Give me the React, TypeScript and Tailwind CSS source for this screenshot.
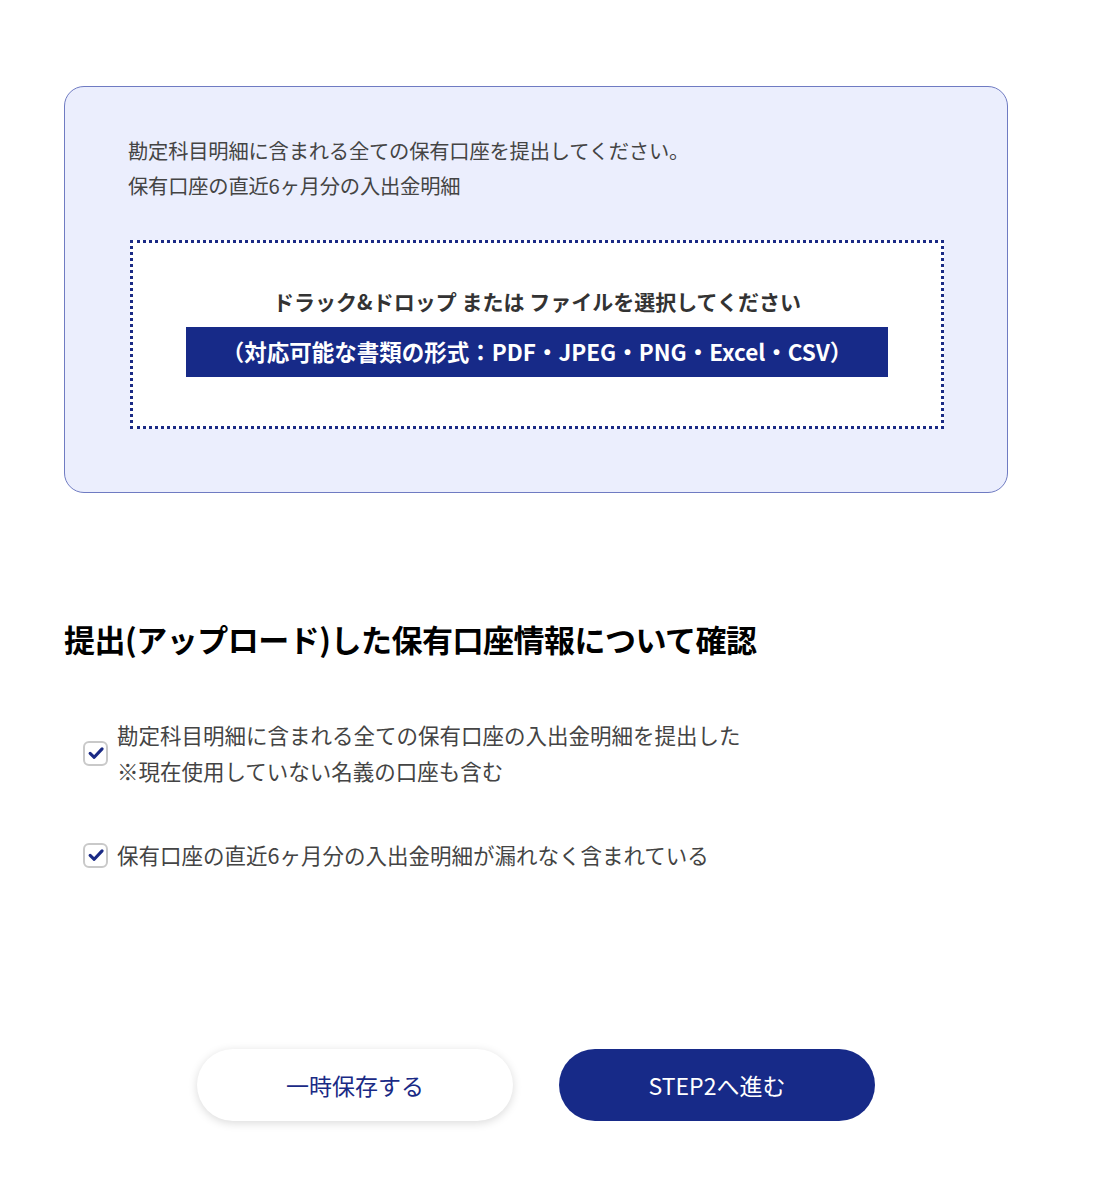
const font = { fontFamily: '"Noto Sans CJK JP", "Noto Sans", sans-serif' };

function CheckItem({ lines }: { lines: string[] }) {
  return (
    <label className="flex items-center gap-[9px]">
      <span className="grid h-[25px] w-[25px] shrink-0 place-items-center rounded-[6px] border-2 border-[#c9c9c9] bg-white">
        <svg viewBox="0 0 16 16" className="h-[18px] w-[18px]">
          <path d="M2.8 8.4 L6.4 11.8 L13.4 4.4" fill="none" stroke="#1a2a85" strokeWidth="2.8" strokeLinecap="round" strokeLinejoin="round" />
        </svg>
      </span>
      <span className="text-[21.5px] leading-[36px] text-[#444]">
        {lines.map((l) => (
          <span key={l} className="block">
            {l}
          </span>
        ))}
      </span>
    </label>
  );
}

export default function App() {
  return (
    <main className="min-h-[1200px] bg-white px-[64px] pt-[86px]" style={font}>
      <div className="w-[944px]">
        <section className="rounded-[20px] border-[1.5px] border-[#6f7bc2] bg-[#ebeefd] px-[63px] pb-[63px] pt-[46px]">
          <p className="text-[20.3px] leading-[35px] tracking-[-0.2px] text-[#444]">
            勘定科目明細に含まれる全ての保有口座を提出してください。
            <br />
            保有口座の直近6ヶ月分の入出金明細
          </p>
          <div className="ml-[2px] mt-[37px] w-[814px] border-[3px] border-dotted border-[#1a2a85] bg-white px-[53px] pb-[49px] pt-[41px]">
            <p className="text-center text-[21px] font-bold leading-[34px] text-[#333]">
              ドラック&ドロップ または ファイルを選択してください
            </p>
            <div className="mt-[9px] flex h-[50px] items-center justify-center bg-[#172a88] text-[22.5px] font-bold text-white">
              （対応可能な書類の形式：PDF・JPEG・PNG・Excel・CSV）
            </div>
          </div>
        </section>

        <h2 className="mt-[124px] text-[31px] font-bold leading-[44px] tracking-[-0.5px] text-black">
          提出(アップロード)した保有口座情報について確認
        </h2>

        <div className="mt-[56px] flex flex-col gap-[48px] pl-[19px]">
          <CheckItem lines={["勘定科目明細に含まれる全ての保有口座の入出金明細を提出した", "※現在使用していない名義の口座も含む"]} />
          <CheckItem lines={["保有口座の直近6ヶ月分の入出金明細が漏れなく含まれている"]} />
        </div>

        <div className="mt-[176px] flex justify-center gap-[46px]">
          <button className="h-[72px] w-[316px] rounded-full bg-white text-[23px] text-[#1a2a85] shadow-[0_2px_10px_rgba(0,0,0,0.15)]">
            一時保存する
          </button>
          <button className="h-[72px] w-[316px] rounded-full bg-[#172a88] text-[23px] text-white">
            STEP2へ進む
          </button>
        </div>
      </div>
    </main>
  );
}
